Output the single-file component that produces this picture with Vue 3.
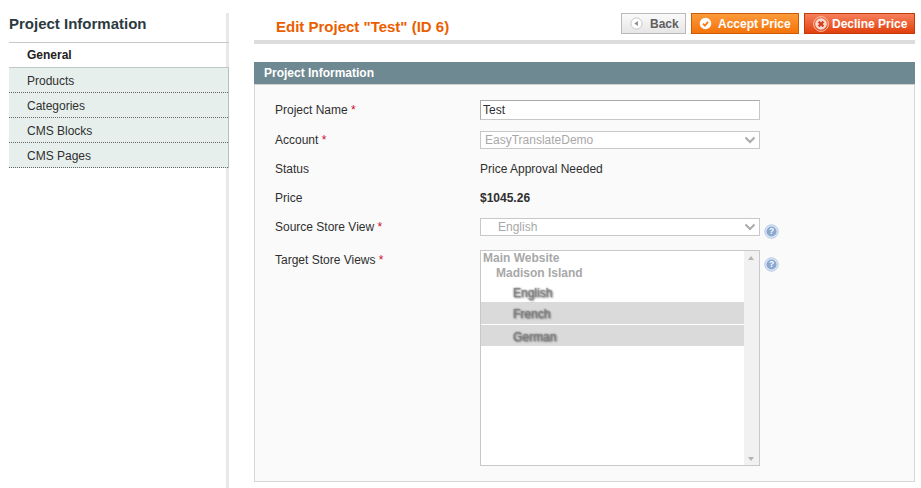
<template>
  <div class="page">
    <aside class="side">
      <h3 class="side-title">Project Information</h3>
      <div class="tab-active">General</div>
      <ul class="tabs">
        <li v-for="tab in tabs" :key="tab">{{ tab }}</li>
      </ul>
    </aside>

    <main class="main">
      <header class="head">
        <h3 class="head-title">Edit Project "Test" (ID 6)</h3>
        <div class="actions">
          <button class="btn back">
            <svg class="ico" viewBox="0 0 14 14">
              <circle cx="7" cy="7" r="6" fill="#fff" stroke="#c4c4c4" />
              <path d="M8.5 4.2v5.6L4.8 7z" fill="#8a8a8a" />
            </svg>
            <span>Back</span>
          </button>
          <button class="btn accept">
            <svg class="ico" viewBox="0 0 14 14">
              <circle cx="7" cy="7" r="6.2" fill="#fff" />
              <path d="M4.3 7.2l2 2 3.500-4" fill="none" stroke="#f77c16" stroke-width="2" />
            </svg>
            <span>Accept Price</span>
          </button>
          <button class="btn decline">
            <svg class="ico big" viewBox="0 0 16 16">
              <circle cx="8" cy="8" r="7.400" fill="none" stroke="#f8c0a8" stroke-width="1" />
              <circle cx="8" cy="8" r="5.800" fill="#f6d9d0" />
              <path d="M5.600 5.600l4.800 4.800M10.400 5.600l-4.800 4.800" stroke="#d8401c" stroke-width="2.200" />
            </svg>
            <span>Decline Price</span>
          </button>
        </div>
      </header>

      <section class="box">
        <h4 class="box-head">Project Information</h4>
        <div class="box-body">
          <div class="row row-name">
            <label>Project Name <em>*</em></label>
            <input class="text-input" type="text" value="Test" />
          </div>
          <div class="row row-account">
            <label>Account <em>*</em></label>
            <div class="select">
              <span>EasyTranslateDemo</span>
              <svg class="chev" viewBox="0 0 12 8"><path d="M1.500 1.500L6 6l4.500-4.500" fill="none" stroke="#aaa" stroke-width="2" /></svg>
            </div>
          </div>
          <div class="row row-status">
            <label>Status</label>
            <div class="value">Price Approval Needed</div>
          </div>
          <div class="row row-price">
            <label>Price</label>
            <div class="value"><strong>$1045.26</strong></div>
          </div>
          <div class="row row-source">
            <label>Source Store View <em>*</em></label>
            <div class="select indent">
              <span>English</span>
              <svg class="chev" viewBox="0 0 12 8"><path d="M1.500 1.500L6 6l4.500-4.500" fill="none" stroke="#aaa" stroke-width="2" /></svg>
            </div>
            <svg class="help" viewBox="0 0 16 16">
              <circle cx="8" cy="8" r="7.200" fill="#dbe6f4" stroke="#b4cae6" />
              <circle cx="8" cy="8" r="5.400" fill="#8aa8d0" />
              <text x="8" y="11" text-anchor="middle" class="help-q">?</text>
            </svg>
          </div>
          <div class="row row-target">
            <label>Target Store Views <em>*</em></label>
            <div class="listbox">
              <div class="list-items">
                <div class="grp">Main Website</div>
                <div class="grp">Madison Island</div>
                <div v-for="o in stores" :key="o.name" class="opt" :class="{ sel: o.selected }">
                  <span>{{ o.name }}</span>
                </div>
              </div>
              <div class="scroll">
                <i class="arrow up"></i>
                <i class="arrow down"></i>
              </div>
            </div>
            <svg class="help" viewBox="0 0 16 16">
              <circle cx="8" cy="8" r="7.200" fill="#dbe6f4" stroke="#b4cae6" />
              <circle cx="8" cy="8" r="5.400" fill="#8aa8d0" />
              <text x="8" y="11" text-anchor="middle" class="help-q">?</text>
            </svg>
          </div>
        </div>
      </section>
    </main>
  </div>
</template>

<script setup>
const tabs = ['Products', 'Categories', 'CMS Blocks', 'CMS Pages']
const stores = [
  { name: 'English', selected: false },
  { name: 'French', selected: true },
  { name: 'German', selected: true }
]
</script>

<style>
html, body {
  margin: 0;
  background: #fff;
  overflow: hidden;
}
</style>

<style scoped>
.page {
  display: flex;
  width: 921px;
  height: 488px;
  overflow: hidden;
  font-family: "Liberation Sans", Arial, sans-serif;
  font-size: 12px;
  color: #2f2f2f;
}

.side {
  width: 217px;
  margin: 13px 0 0 9px;
  border-right: 3px solid #e8e8e8;
}

.side-title {
  margin: 0 -3px 0 0;
  height: 29px;
  line-height: 22px;
  font-size: 15px;
  font-weight: bold;
  color: #2b3a40;
  border-bottom: 1px solid #c4c8c8;
}

.tab-active {
  height: 24px;
  line-height: 25px;
  padding-left: 18px;
  font-weight: bold;
  color: #222;
}

.tabs {
  list-style: none;
  margin: 0 -3px 0 0;
  padding: 0;
  border-top: 1px solid #bcc8c8;
  border-right: 1px solid #b4c0c0;
}

.tabs li {
  height: 24px;
  line-height: 27px;
  padding-left: 18px;
  background: #e7efed;
  border-bottom: 1px dotted #666;
}

.main {
  margin-left: 25px;
  width: 661px;
}

.head {
  display: flex;
  justify-content: space-between;
  height: 40px;
  border-bottom: 4px solid #dcdcdc;
}

.head-title {
  margin: 18px 0 0 22px;
  line-height: 18px;
  font-size: 15px;
  font-weight: bold;
  color: #eb5e00;
}

.actions {
  display: flex;
  gap: 5px;
  margin-top: 13px;
}

.btn {
  display: flex;
  align-items: center;
  height: 21px;
  padding: 0;
  border: 1px solid;
  font-family: inherit;
  font-size: 12px;
  font-weight: bold;
}

.ico {
  width: 13px;
  height: 13px;
  flex: none;
}

.ico.big {
  width: 16px;
  height: 16px;
}

.back {
  width: 65px;
  padding-left: 8px;
  gap: 7px;
  color: #5f5f5f;
  border-color: #b9b9b9;
  background: linear-gradient(#fafafa, #e6e6e6);
}

.accept {
  width: 108px;
  padding-left: 7px;
  gap: 6px;
  color: #fff;
  border-color: #c95a07;
  background: linear-gradient(#fd9a3a, #f4730b);
}

.decline {
  width: 111px;
  padding-left: 8px;
  gap: 3px;
  color: #fff;
  border-color: #c23a0a;
  background: linear-gradient(#f7805c, #e13f0c);
}

.box {
  margin-top: 18px;
}

.box-head {
  margin: 0;
  height: 22px;
  line-height: 23px;
  padding-left: 10px;
  background: #6f8992;
  color: #fff;
  font-size: 12px;
  font-weight: bold;
}

.box-body {
  height: 398px;
  box-sizing: border-box;
  padding: 15px 0 0 20px;
  background: #fafafa;
  border: 1px solid #d6d6d6;
  border-top-color: #d0d0d0;
}

.row {
  display: flex;
  align-items: flex-start;
}

.row label {
  width: 205px;
  flex: none;
}

.row em {
  font-style: normal;
  color: #c8102e;
}

.row-name { height: 20px; margin-bottom: 11px; }
.row-name label { line-height: 20px; }
.row-account { height: 18px; margin-bottom: 11px; }
.row-account label { line-height: 18px; }
.row-status { height: 18px; margin-bottom: 11px; line-height: 18px; }
.row-price { height: 18px; margin-bottom: 11px; line-height: 18px; }
.row-source { height: 18px; margin-bottom: 14px; }
.row-source label { line-height: 18px; }
.row-target label { line-height: 20px; }

.value {
  color: #2f2f2f;
}

.text-input {
  box-sizing: border-box;
  width: 280px;
  height: 20px;
  padding: 0 2px;
  margin: 0;
  border: 1px solid #aaa;
  border-right-color: #c8c8c8;
  border-bottom-color: #c8c8c8;
  border-radius: 0;
  font-family: inherit;
  font-size: 12px;
  color: #2f2f2f;
  background: #fff;
  outline: none;
}

.select {
  box-sizing: border-box;
  display: flex;
  align-items: center;
  justify-content: space-between;
  width: 280px;
  height: 18px;
  padding: 0 3px 0 4px;
  border: 1px solid #c8c8c8;
  background: #fff;
  color: #a8a8a8;
}

.select.indent {
  padding-left: 17px;
}

.chev {
  width: 12px;
  height: 8px;
}

.help {
  width: 15px;
  height: 15px;
  margin: 6px 0 0 4px;
  flex: none;
}

.row-target .help {
  margin-top: 7px;
}

.help-q {
  font-size: 9px;
  font-weight: bold;
  fill: #fff;
  font-family: "Liberation Sans", sans-serif;
}

.listbox {
  box-sizing: border-box;
  display: flex;
  width: 280px;
  height: 216px;
  background: #fff;
  border: 1px solid #c8c8c8;
}

.list-items {
  flex: 1;
  color: #a8a8a8;
}

.grp {
  font-weight: bold;
  height: 15px;
  line-height: 15px;
  padding-left: 2px;
}

.grp + .grp {
  padding-left: 15px;
}

.opt {
  height: 22px;
  line-height: 24px;
  padding-left: 32px;
  margin-bottom: 1px;
}

.opt:not(.sel) {
  height: 20px;
}

.opt:last-child {
  height: 21px;
}

.opt span {
  color: rgba(140, 140, 140, 0.4);
  text-shadow: 0 0 2px #707070, 1px 1px 2px rgba(90, 90, 90, 0.75), 0 0 1px rgba(120, 120, 120, 0.6);
}

.opt.sel {
  background: #dadada;
}

.scroll {
  position: relative;
  width: 15px;
  background: #f1f1f1;
}

.arrow {
  position: absolute;
  left: 4px;
  border-left: 3.500px solid transparent;
  border-right: 3.500px solid transparent;
}

.arrow.up {
  top: 5px;
  border-bottom: 4px solid #b4b4b4;
}

.arrow.down {
  bottom: 4px;
  border-top: 4px solid #b4b4b4;
}
</style>
